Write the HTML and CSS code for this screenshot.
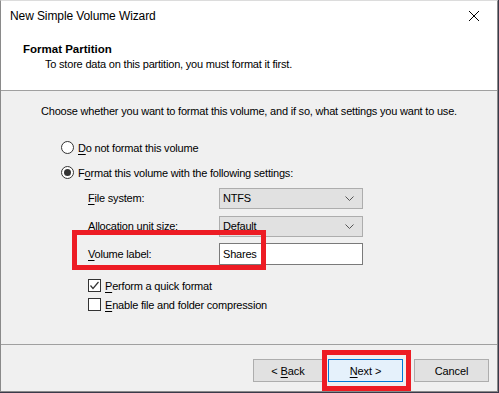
FILE: index.html
```html
<!DOCTYPE html>
<html lang="en">
<head>
  <meta charset="UTF-8" />
  <title>New Simple Volume Wizard</title>
  <link rel="stylesheet" href="styles.css">
</head>
<body>

  <div class="window">

    <div class="titlebar">
      <span class="title">New Simple Volume Wizard</span>
      <svg class="close" width="12" height="12" viewBox="0 0 12 12">
        <path d="M1 1 L11 11 M11 1 L1 11" stroke="#000" stroke-width="1" fill="none" />
      </svg>
    </div>

    <div class="header">
      <h1>Format Partition</h1>
      <p>To store data on this partition, you must format it first.</p>
    </div>

    <div class="content">
      <p class="intro">Choose whether you want to format this volume, and if so, what settings you want to use.</p>

      <label class="option first">
        <span class="radio"></span>
        <span><u>D</u>o not format this volume</span>
      </label>
      <label class="option">
        <span class="radio checked"></span>
        <span>F<u>o</u>rmat this volume with the following settings:</span>
      </label>

      <div class="settings">
        <div class="field">
          <span class="field-label"><u>F</u>ile system:</span>
          <div class="select">
            <span>NTFS</span>
            <svg width="9" height="5" viewBox="0 0 9 5"><path d="M0.5 0.5 L4.5 4.5 L8.5 0.5" stroke="#555" fill="none" /></svg>
          </div>
        </div>
        <div class="field">
          <span class="field-label">Allocation unit size:</span>
          <div class="select">
            <span>Default</span>
            <svg width="9" height="5" viewBox="0 0 9 5"><path d="M0.5 0.5 L4.5 4.5 L8.5 0.5" stroke="#555" fill="none" /></svg>
          </div>
        </div>
        <div class="field">
          <span class="field-label"><u>V</u>olume label:</span>
          <div class="textbox">Shares</div>
        </div>
      </div>

      <label class="check first">
        <span class="box">
          <svg width="11" height="11" viewBox="0 0 11 11"><path d="M1.5 5.5 L4 8.5 L9.5 2" stroke="#333" stroke-width="1.2" fill="none" /></svg>
        </span>
        <span><u>P</u>erform a quick format</span>
      </label>
      <label class="check">
        <span class="box"></span>
        <span><u>E</u>nable file and folder compression</span>
      </label>

      <div class="highlight label-mark"></div>
    </div>

    <div class="footer">
      <button class="btn back">&lt; <u>B</u>ack</button>
      <button class="btn primary"><u>N</u>ext &gt;</button>
      <button class="btn cancel">Cancel</button>
      <div class="highlight next-mark"></div>
    </div>

  </div>

</body>
</html>
```

FILE: styles.css
```css
* {
  margin: 0;
  padding: 0;
  box-sizing: border-box;
}

body {
  background: #3a3a4a;
  font-family: 'Liberation Sans', Arial, sans-serif;
  font-size: 11px;
  letter-spacing: -0.2px;
  color: #000;
  width: 499px;
  height: 393px;
  overflow: hidden;
}

u {
  text-decoration: underline;
  text-underline-offset: 2px;
}

.window {
  width: 498px;
  height: 392px;
  background: #f0f0f0;
  border: 1px solid #8a8a8a;
  border-top-color: #dcdcdc;
  display: flex;
  flex-direction: column;
}

.titlebar {
  height: 30px;
  background: #fff;
  display: flex;
  align-items: center;
  justify-content: space-between;
  padding: 0 17px 0 9px;
}

.title {
  font-size: 12px;
  letter-spacing: -0.1px;
}

.header {
  height: 60px;
  background: #fff;
  border-bottom: 1px solid #a0a0a0;
  padding: 11px 0 0 22px;
}

.header h1 {
  font-size: 11.5px;
  font-weight: bold;
  letter-spacing: 0;
  line-height: 15px;
}

.header p {
  line-height: 15px;
  padding-left: 22px;
}

.content {
  position: relative;
  height: 254px;
  border-bottom: 1px solid #a0a0a0;
  padding: 13px 0 0 40px;
}

.intro {
  line-height: 15px;
}

.option {
  display: flex;
  align-items: center;
  gap: 4px;
  height: 15px;
  margin-top: 10px;
  padding-left: 20px;
}

.option.first {
  margin-top: 21px;
}

.radio {
  width: 13px;
  height: 13px;
  border: 1px solid #333;
  border-radius: 50%;
  background: #fff;
  display: flex;
  align-items: center;
  justify-content: center;
}

.radio.checked::after {
  content: "";
  width: 7px;
  height: 7px;
  border-radius: 50%;
  background: #333;
}

.settings {
  padding-left: 47px;
  margin-top: 7px;
  display: flex;
  flex-direction: column;
  gap: 6px;
}

.field {
  display: flex;
  align-items: center;
  height: 22px;
}

.field-label {
  width: 131px;
}

.select {
  width: 144px;
  height: 21px;
  background: #e1e1e1;
  border: 1px solid #adadad;
  display: flex;
  align-items: center;
  justify-content: space-between;
  padding: 0 8px 0 3px;
}

.textbox {
  width: 144px;
  height: 22px;
  background: #fff;
  border: 1px solid #7a7a7a;
  display: flex;
  align-items: center;
  padding-left: 3px;
}

.check {
  display: flex;
  align-items: center;
  gap: 4px;
  height: 15px;
  margin-top: 4px;
  padding-left: 47px;
}

.check.first {
  margin-top: 13px;
}

.box {
  width: 13px;
  height: 13px;
  border: 1px solid #333;
  background: #fff;
  display: flex;
  align-items: center;
  justify-content: center;
}

.footer {
  position: relative;
  flex: 1;
  display: flex;
  justify-content: flex-end;
  padding: 14px 8px 0 0;
  gap: 5px;
}

.btn {
  font-family: inherit;
  font-size: 11px;
  letter-spacing: -0.1px;
  width: 75px;
  height: 23px;
  background: #e1e1e1;
  border: 1px solid #adadad;
  color: #000;
}

.btn.back {
  width: 70px;
}

.btn.primary {
  background: #e5f1fb;
  border: 1px solid #0078d7;
}

.btn.cancel {
  margin-left: 6px;
}

.highlight {
  position: absolute;
  border: 5px solid #ed1c24;
}

.label-mark {
  left: 71px;
  top: 139px;
  width: 194px;
  height: 40px;
}

.next-mark {
  left: 321px;
  top: 5px;
  width: 89px;
  height: 41px;
}
```
